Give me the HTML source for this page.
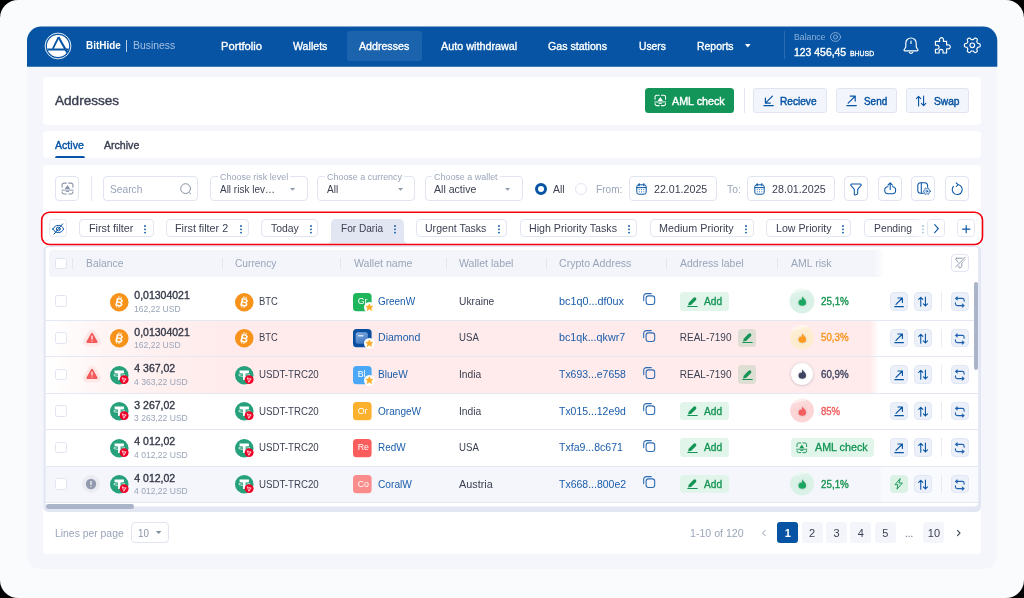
<!DOCTYPE html>
<html><head><meta charset="utf-8"><title>Addresses</title>
<style>
html,body{margin:0;padding:0}
body{width:1024px;height:598px;background:#000;overflow:hidden;font-family:"Liberation Sans",sans-serif;}
#frame{will-change:transform;position:absolute;left:0;top:0;width:1024px;height:598px;border-radius:18px;background:#fafbfd;overflow:hidden}
.b{position:absolute;box-sizing:border-box}
.t{position:absolute;white-space:nowrap;transform-origin:0 50%}
.card{background:#fff;border-radius:4px}
.btn{background:#fff;border:1px solid #e0e5f1;border-radius:4px}
.chip{background:#fff;border:1px solid #e0e5f1;border-radius:4px}
.rb{background:#ecf0f9;border:1px solid #e1e7f5;border-radius:4px}
.pg{background:#f3f5fa;border-radius:3px;color:#3a3f51;font-size:11px;display:flex;align-items:center;justify-content:center}
svg{overflow:visible}
</style></head><body><div id="frame">
<div class="b" style="left:27.00px;top:27.00px;width:970.30px;height:542.00px;background:#f4f6fb;border-radius:15px 15px 13px 13px"></div>
<svg class="b" style="left:0.00px;top:0.00px;" width="1024" height="598" viewBox="0 0 1024 598"><path fill="#0654a3" d="M27 66.7V40.8A14.2 14.2 0 0 1 41.2 26.6H983.1A14.2 14.2 0 0 1 997.3 40.8V66.7Z"/></svg>
<svg class="b" style="left:44.00px;top:31.50px;" width="28" height="28" viewBox="-14 -14 28 28"><circle r="12.9" fill="none" stroke="#fff" stroke-width="0.9"/><circle r="11.1" fill="#fff"/><path fill="none" stroke="#0654a3" stroke-width="1.8" d="M0.6 -8.9L-5.2 2.8"/><path fill="none" stroke="#0654a3" stroke-width="1.9" d="M-10.6 3.5H10.6"/><path fill="none" stroke="#0654a3" stroke-width="2.1" d="M0.4 -8.9L9.4 6.8"/></svg>
<span class="t" style="left:85.50px;top:39.00px;font-size:10px;line-height:13px;color:#fff;font-weight:700;transform:scaleX(0.9943);">BitHide</span>
<div class="b" style="left:126.00px;top:39.80px;width:1.10px;height:12.00px;background:rgba(255,255,255,.7)"></div>
<span class="t" style="left:132.60px;top:39.00px;font-size:10px;line-height:13px;color:#a4c0e2;transform:scaleX(1.0375);">Business</span>
<div class="b" style="left:346.90px;top:31.00px;width:74.90px;height:29.70px;background:#1b63ad;border-radius:3px"></div>
<span class="t" style="left:220.50px;top:39.00px;font-size:11px;line-height:15px;color:#fff;transform:scaleX(1.0157);-webkit-text-stroke:0.35px #fff;">Portfolio</span>
<span class="t" style="left:292.70px;top:39.00px;font-size:11px;line-height:15px;color:#fff;transform:scaleX(0.9648);-webkit-text-stroke:0.35px #fff;">Wallets</span>
<span class="t" style="left:358.90px;top:39.00px;font-size:11px;line-height:15px;color:#fff;transform:scaleX(0.9658);-webkit-text-stroke:0.35px #fff;">Addresses</span>
<span class="t" style="left:440.80px;top:39.00px;font-size:11px;line-height:15px;color:#fff;transform:scaleX(0.9812);-webkit-text-stroke:0.35px #fff;">Auto withdrawal</span>
<span class="t" style="left:548.00px;top:39.00px;font-size:11px;line-height:15px;color:#fff;transform:scaleX(0.9650);-webkit-text-stroke:0.35px #fff;">Gas stations</span>
<span class="t" style="left:638.50px;top:39.00px;font-size:11px;line-height:15px;color:#fff;transform:scaleX(0.9366);-webkit-text-stroke:0.35px #fff;">Users</span>
<span class="t" style="left:697.40px;top:39.00px;font-size:11px;line-height:15px;color:#fff;transform:scaleX(0.9502);-webkit-text-stroke:0.35px #fff;">Reports</span>
<svg class="b" style="left:744.80px;top:44.30px;" width="5.6" height="3.4" viewBox="0 0 5.6 3.4"><path fill="#fff" d="M0 0h5.6L2.8 3.4z"/></svg>
<div class="b" style="left:784.00px;top:31.30px;width:1.00px;height:28.00px;background:rgba(255,255,255,.14)"></div>
<span class="t" style="left:793.60px;top:31.00px;font-size:9px;line-height:12px;color:#8fb1db;transform:scaleX(0.9654);">Balance</span>
<svg class="b" style="left:829.70px;top:32.20px;" width="11" height="10" viewBox="0 0 11 10"><ellipse cx="5.5" cy="5" rx="5" ry="4.4" fill="none" stroke="#8fb1db" stroke-width="0.9" stroke-linecap="round" stroke-linejoin="round"/><circle cx="5.5" cy="5" r="2" fill="none" stroke="#8fb1db" stroke-width="0.9" stroke-linecap="round" stroke-linejoin="round"/></svg>
<span class="t" style="left:793.60px;top:45.00px;font-size:11px;line-height:15px;color:#fff;transform:scaleX(0.9476);-webkit-text-stroke:0.4px #fff;">123 456,45</span>
<span class="t" style="left:849.50px;top:49.00px;font-size:7.5px;line-height:10px;color:#fff;transform:scaleX(0.9192);-webkit-text-stroke:0.3px #fff;">BHUSD</span>
<svg class="b" style="left:903.30px;top:36.60px;" width="16" height="18" viewBox="0 0 16 18"><path fill="none" stroke="#fff" stroke-width="1.15" stroke-linecap="round" stroke-linejoin="round" d="M8 1A5.2 5.2 0 0 0 2.8 6.2V9.4C2.8 11 1 12.2 1 13.2A.7 .7 0 0 0 1.7 13.9H14.3A.7 .7 0 0 0 15 13.2C15 12.2 13.2 11 13.2 9.4V6.2A5.2 5.2 0 0 0 8 1Z"/><path fill="none" stroke="#fff" stroke-width="1.15" stroke-linecap="round" stroke-linejoin="round" d="M6.2 15.2A2 2 0 0 0 9.8 15.2M8 4V6.4"/></svg>
<svg class="b" style="left:932.50px;top:37.00px;" width="18" height="17.5" viewBox="0 0 18 17.5"><path fill="none" stroke="#fff" stroke-width="1.15" stroke-linecap="round" stroke-linejoin="round" d="M6.6 3.3A2 2 0 1 1 10.4 3.3V4.4H13.6V7.9H14.7A2 2 0 1 1 14.7 11.7H13.6V16H10V15A2 2 0 1 0 6.2 15V16H2.4V12.2H3.3A2.1 2.1 0 1 0 3.3 8.2H2.4V4.4H6.6Z"/></svg>
<svg class="b" style="left:964.00px;top:37.20px;" width="16.6" height="16.6" viewBox="-8.3 -8.3 16.6 16.6"><path fill="none" stroke="#fff" stroke-width="1.15" stroke-linecap="round" stroke-linejoin="round" d="M7.90 0.00L7.90 0.28L7.88 0.55L7.86 0.83L7.82 1.10L7.67 1.35L7.25 1.54L6.80 1.70L6.34 1.82L5.89 1.91L5.46 1.99L5.28 2.14L5.21 2.32L5.12 2.50L5.03 2.68L4.94 2.85L4.83 3.02L4.73 3.19L4.61 3.35L4.49 3.51L4.45 3.73L4.60 4.14L4.74 4.58L4.87 5.04L4.96 5.51L5.01 5.97L4.86 6.23L4.64 6.39L4.42 6.55L4.19 6.70L3.95 6.84L3.71 6.98L3.46 7.10L3.21 7.22L2.96 7.32L2.66 7.32L2.29 7.05L1.93 6.74L1.59 6.40L1.29 6.05L1.01 5.72L0.79 5.64L0.60 5.67L0.40 5.69L0.20 5.70L0.00 5.70L-0.20 5.70L-0.40 5.69L-0.60 5.67L-0.79 5.64L-1.01 5.72L-1.29 6.05L-1.59 6.40L-1.93 6.74L-2.29 7.05L-2.66 7.32L-2.96 7.32L-3.21 7.22L-3.46 7.10L-3.71 6.98L-3.95 6.84L-4.19 6.70L-4.42 6.55L-4.64 6.39L-4.86 6.23L-5.01 5.97L-4.96 5.51L-4.87 5.04L-4.74 4.58L-4.60 4.14L-4.45 3.73L-4.49 3.51L-4.61 3.35L-4.73 3.19L-4.83 3.02L-4.94 2.85L-5.03 2.68L-5.12 2.50L-5.21 2.32L-5.28 2.14L-5.46 1.99L-5.89 1.91L-6.34 1.82L-6.80 1.70L-7.25 1.54L-7.67 1.35L-7.82 1.10L-7.86 0.83L-7.88 0.55L-7.90 0.28L-7.90 0.00L-7.90 -0.28L-7.88 -0.55L-7.86 -0.83L-7.82 -1.10L-7.67 -1.35L-7.25 -1.54L-6.80 -1.70L-6.34 -1.82L-5.89 -1.91L-5.46 -1.99L-5.28 -2.14L-5.21 -2.32L-5.12 -2.50L-5.03 -2.68L-4.94 -2.85L-4.83 -3.02L-4.73 -3.19L-4.61 -3.35L-4.49 -3.51L-4.45 -3.73L-4.60 -4.14L-4.74 -4.58L-4.87 -5.04L-4.96 -5.51L-5.01 -5.97L-4.86 -6.23L-4.64 -6.39L-4.42 -6.55L-4.19 -6.70L-3.95 -6.84L-3.71 -6.98L-3.46 -7.10L-3.21 -7.22L-2.96 -7.32L-2.66 -7.32L-2.29 -7.05L-1.93 -6.74L-1.59 -6.40L-1.29 -6.05L-1.01 -5.72L-0.79 -5.64L-0.60 -5.67L-0.40 -5.69L-0.20 -5.70L-0.00 -5.70L0.20 -5.70L0.40 -5.69L0.60 -5.67L0.79 -5.64L1.01 -5.72L1.29 -6.05L1.59 -6.40L1.93 -6.74L2.29 -7.05L2.66 -7.32L2.96 -7.32L3.21 -7.22L3.46 -7.10L3.71 -6.98L3.95 -6.84L4.19 -6.70L4.42 -6.55L4.64 -6.39L4.86 -6.23L5.01 -5.97L4.96 -5.51L4.87 -5.04L4.74 -4.58L4.60 -4.14L4.45 -3.73L4.49 -3.51L4.61 -3.35L4.73 -3.19L4.83 -3.02L4.94 -2.85L5.03 -2.68L5.12 -2.50L5.21 -2.32L5.28 -2.14L5.46 -1.99L5.89 -1.91L6.34 -1.82L6.80 -1.70L7.25 -1.54L7.67 -1.35L7.82 -1.10L7.86 -0.83L7.88 -0.55L7.90 -0.28Z"/><circle r="2.3" fill="none" stroke="#fff" stroke-width="1.15" stroke-linecap="round" stroke-linejoin="round"/></svg>
<div class="b card" style="left:43.00px;top:76.50px;width:938.00px;height:48.10px;"></div>
<span class="t" style="left:55.40px;top:92.00px;font-size:13px;line-height:17px;color:#3a3f51;transform:scaleX(1.0444);-webkit-text-stroke:0.4px #3a3f51;">Addresses</span>
<div class="b" style="left:644.50px;top:88.20px;width:89.80px;height:24.40px;background:#139458;border-radius:3.5px"></div>
<svg class="b" style="left:653.80px;top:93.90px;" width="12.6" height="12.8" viewBox="0 0 12 12"><path fill="none" stroke="#fff" stroke-width="1.0" stroke-linecap="round" stroke-linejoin="round" d="M1 4.8V2.8A1.8 1.8 0 0 1 2.8 1H4.9M7.1 1H9.2A1.8 1.8 0 0 1 11 2.8V4.8M11 9V9.2A1.8 1.8 0 0 1 9.2 11H7.1M4.9 11H2.8A1.8 1.8 0 0 1 1 9.2V9"/><path fill="#fff" d="M6 2.7L8.5 6.5H3.5z"/><path fill="none" stroke="#fff" stroke-width="0.9" stroke-linecap="round" stroke-linejoin="round" d="M0.8 7.5h10.4"/><path fill="#fff" d="M3.9 8.4h4.2Q6 10.3 3.9 8.4z"/></svg>
<span class="t" style="left:672.30px;top:94.00px;font-size:11px;line-height:15px;color:#fff;transform:scaleX(0.9753);-webkit-text-stroke:0.4px #fff;">AML check</span>
<div class="b" style="left:743.50px;top:88.20px;width:1.00px;height:24.40px;background:#e3e7f1"></div>
<div class="b" style="left:753.00px;top:88.20px;width:73.70px;height:24.40px;background:#f2f5fb;border:1px solid #e0e5f1;border-radius:3px"></div>
<svg class="b" style="left:762.50px;top:94.50px;" width="11.2" height="11.5" viewBox="0 0 10.2 10.5"><path fill="none" stroke="#0654a3" stroke-width="1.1" stroke-linecap="round" stroke-linejoin="round" d="M8.6 1L2.2 7.4M2.2 2.9v4.5h4.5M0.8 9.7h8.6"/></svg>
<span class="t" style="left:780.40px;top:94.00px;font-size:11px;line-height:15px;color:#0654a3;transform:scaleX(0.9197);-webkit-text-stroke:0.45px #0654a3;">Recieve</span>
<div class="b" style="left:835.90px;top:88.20px;width:60.70px;height:24.40px;background:#f2f5fb;border:1px solid #e0e5f1;border-radius:3px"></div>
<svg class="b" style="left:845.70px;top:94.50px;" width="11.2" height="11.5" viewBox="0 0 10.2 10.5"><path fill="none" stroke="#0654a3" stroke-width="1.1" stroke-linecap="round" stroke-linejoin="round" d="M2 7.4L8.4 1M3.9 1h4.5v4.5M0.8 9.7h8.6"/></svg>
<span class="t" style="left:863.60px;top:94.00px;font-size:11px;line-height:15px;color:#0654a3;transform:scaleX(0.9014);-webkit-text-stroke:0.45px #0654a3;">Send</span>
<div class="b" style="left:906.10px;top:88.20px;width:62.70px;height:24.40px;background:#f2f5fb;border:1px solid #e0e5f1;border-radius:3px"></div>
<svg class="b" style="left:915.70px;top:94.60px;" width="10.2" height="12" viewBox="0 0 10.2 12"><path fill="none" stroke="#0654a3" stroke-width="1.1" stroke-linecap="round" stroke-linejoin="round" d="M2.6 11V1.4M0.4 3.6L2.6 1.4L4.8 3.6M7.6 1v9.6M5.4 8.4L7.6 10.6L9.8 8.4"/></svg>
<span class="t" style="left:933.70px;top:94.00px;font-size:11px;line-height:15px;color:#0654a3;transform:scaleX(0.9285);-webkit-text-stroke:0.45px #0654a3;">Swap</span>
<div class="b card" style="left:43.00px;top:130.80px;width:938.00px;height:27.50px;"></div>
<span class="t" style="left:55.40px;top:138.00px;font-size:11px;line-height:15px;color:#0654a3;transform:scaleX(0.9637);-webkit-text-stroke:0.4px #0654a3;">Active</span>
<span class="t" style="left:103.80px;top:138.00px;font-size:11px;line-height:15px;color:#3a3f51;transform:scaleX(0.9615);-webkit-text-stroke:0.4px #3a3f51;">Archive</span>
<div class="b" style="left:55.00px;top:156.20px;width:30.00px;height:2.10px;background:#0654a3;border-radius:2px 2px 0 0"></div>
<div class="b card" style="left:43.00px;top:164.60px;width:938.00px;height:389.60px;"></div>
<div class="b btn" style="left:55.00px;top:176.30px;width:24.00px;height:24.60px;"></div>
<svg class="b" style="left:60.50px;top:182.20px;" width="13" height="13" viewBox="0 0 12 12"><path fill="none" stroke="#8892a8" stroke-width="1.0" stroke-linecap="round" stroke-linejoin="round" d="M1 4.8V2.8A1.8 1.8 0 0 1 2.8 1H4.9M7.1 1H9.2A1.8 1.8 0 0 1 11 2.8V4.8M11 9V9.2A1.8 1.8 0 0 1 9.2 11H7.1M4.9 11H2.8A1.8 1.8 0 0 1 1 9.2V9"/><path fill="#8892a8" d="M6 2.7L8.5 6.5H3.5z"/><path fill="none" stroke="#8892a8" stroke-width="0.9" stroke-linecap="round" stroke-linejoin="round" d="M0.8 7.5h10.4"/><path fill="#8892a8" d="M3.9 8.4h4.2Q6 10.3 3.9 8.4z"/></svg>
<div class="b" style="left:91.30px;top:176.30px;width:1.00px;height:24.60px;background:#e3e7f1"></div>
<div class="b btn" style="left:103.40px;top:176.30px;width:94.30px;height:24.60px;"></div>
<span class="t" style="left:109.70px;top:182.00px;font-size:11px;line-height:15px;color:#9aa5b9;transform:scaleX(0.9267);">Search</span>
<svg class="b" style="left:179.80px;top:183.20px;" width="12" height="12" viewBox="0 0 12 12"><circle cx="5.6" cy="5.6" r="4.9" fill="none" stroke="#7f8a9f" stroke-width="0.95" stroke-linecap="round" stroke-linejoin="round"/><path fill="none" stroke="#7f8a9f" stroke-width="0.95" stroke-linecap="round" stroke-linejoin="round" d="M9.6 9.8l1 1"/></svg>
<div class="b btn" style="left:210.00px;top:176.30px;width:98.00px;height:24.60px;"></div>
<div class="b" style="left:217.50px;top:175.30px;width:72.20px;height:3.00px;background:#fff"></div>
<span class="t" style="left:219.50px;top:171.00px;font-size:8.5px;line-height:12px;color:#9aa5b9;transform:scaleX(1.0537);">Choose risk level</span>
<span class="t" style="left:219.50px;top:182.00px;font-size:11px;line-height:15px;color:#3a3f51;transform:scaleX(0.9073);">All risk lev…</span>
<svg class="b" style="left:290.40px;top:187.60px;" width="5.2" height="2.8" viewBox="0 0 5.6 3"><path fill="#939db0" d="M0 0h5.6L2.8 3z"/></svg>
<div class="b btn" style="left:317.30px;top:176.30px;width:98.00px;height:24.60px;"></div>
<div class="b" style="left:324.80px;top:175.30px;width:79.00px;height:3.00px;background:#fff"></div>
<span class="t" style="left:326.80px;top:171.00px;font-size:8.5px;line-height:12px;color:#9aa5b9;transform:scaleX(1.0513);">Choose a currency</span>
<span class="t" style="left:326.80px;top:182.00px;font-size:11px;line-height:15px;color:#3a3f51;transform:scaleX(0.9161);">All</span>
<svg class="b" style="left:397.50px;top:187.60px;" width="5.2" height="2.8" viewBox="0 0 5.6 3"><path fill="#939db0" d="M0 0h5.6L2.8 3z"/></svg>
<div class="b btn" style="left:424.60px;top:176.30px;width:98.00px;height:24.60px;"></div>
<div class="b" style="left:432.10px;top:175.30px;width:67.60px;height:3.00px;background:#fff"></div>
<span class="t" style="left:434.10px;top:171.00px;font-size:8.5px;line-height:12px;color:#9aa5b9;transform:scaleX(1.0516);">Choose a wallet</span>
<span class="t" style="left:434.10px;top:182.00px;font-size:11px;line-height:15px;color:#3a3f51;transform:scaleX(0.9610);">All active</span>
<svg class="b" style="left:505.00px;top:187.60px;" width="5.2" height="2.8" viewBox="0 0 5.6 3"><path fill="#939db0" d="M0 0h5.6L2.8 3z"/></svg>
<div class="b" style="left:534.60px;top:183.00px;width:12.40px;height:12.40px;border:3.2px solid #0654a3;border-radius:50%;background:#fff"></div>
<span class="t" style="left:553.40px;top:182.00px;font-size:11px;line-height:15px;color:#3a3f51;transform:scaleX(0.9488);">All</span>
<div class="b" style="left:574.70px;top:183.00px;width:12.20px;height:12.20px;border:1px solid #e0e5f1;border-radius:50%;background:#fff"></div>
<span class="t" style="left:596.20px;top:182.00px;font-size:11px;line-height:15px;color:#9aa5b9;transform:scaleX(0.9192);">From:</span>
<div class="b btn" style="left:629.20px;top:176.30px;width:87.60px;height:24.60px;"></div>
<svg class="b" style="left:636.00px;top:183.00px;" width="11" height="12" viewBox="0 0 11 12"><rect fill="none" stroke="#0654a3" stroke-width="1.0" stroke-linecap="round" stroke-linejoin="round" x="0.8" y="1.8" width="9.4" height="9.4" rx="2"/><path fill="none" stroke="#0654a3" stroke-width="1.0" stroke-linecap="round" stroke-linejoin="round" d="M3.2 0.6v2.2M7.8 0.6v2.2M1 4.6h9"/><path fill="none" stroke="#0654a3" stroke-width="0.9" stroke-linecap="round" stroke-linejoin="round" d="M3.2 6.6h0.1M5.5 6.6h0.1M7.8 6.6h0.1M3.2 8.8h0.1M5.5 8.8h0.1M7.8 8.8h0.1"/></svg>
<span class="t" style="left:654.10px;top:182.00px;font-size:11px;line-height:15px;color:#3a3f51;transform:scaleX(0.9663);">22.01.2025</span>
<span class="t" style="left:726.60px;top:182.00px;font-size:11px;line-height:15px;color:#9aa5b9;transform:scaleX(0.9404);">To:</span>
<div class="b btn" style="left:747.00px;top:176.30px;width:87.80px;height:24.60px;"></div>
<svg class="b" style="left:753.80px;top:183.00px;" width="11" height="12" viewBox="0 0 11 12"><rect fill="none" stroke="#0654a3" stroke-width="1.0" stroke-linecap="round" stroke-linejoin="round" x="0.8" y="1.8" width="9.4" height="9.4" rx="2"/><path fill="none" stroke="#0654a3" stroke-width="1.0" stroke-linecap="round" stroke-linejoin="round" d="M3.2 0.6v2.2M7.8 0.6v2.2M1 4.6h9"/><path fill="none" stroke="#0654a3" stroke-width="0.9" stroke-linecap="round" stroke-linejoin="round" d="M3.2 6.6h0.1M5.5 6.6h0.1M7.8 6.6h0.1M3.2 8.8h0.1M5.5 8.8h0.1M7.8 8.8h0.1"/></svg>
<span class="t" style="left:771.70px;top:182.00px;font-size:11px;line-height:15px;color:#3a3f51;transform:scaleX(0.9736);">28.01.2025</span>
<div class="b btn" style="left:844.20px;top:176.30px;width:24.10px;height:24.60px;"></div>
<div class="b btn" style="left:877.80px;top:176.30px;width:24.10px;height:24.60px;"></div>
<div class="b btn" style="left:911.20px;top:176.30px;width:24.10px;height:24.60px;"></div>
<div class="b btn" style="left:944.90px;top:176.30px;width:24.10px;height:24.60px;"></div>
<svg class="b" style="left:850.40px;top:182.60px;" width="12" height="12.6" viewBox="0 0 12 12.6"><path fill="none" stroke="#0654a3" stroke-width="1.05" stroke-linecap="round" stroke-linejoin="round" d="M1.7 1H10.3A.9 .9 0 0 1 11 2.5L7.7 6.3V10.3A1 1 0 0 1 7.1 11.2L5.5 11.9A.8 .8 0 0 1 4.3 11.2V6.3L1 2.5A.9 .9 0 0 1 1.7 1Z"/></svg>
<svg class="b" style="left:883.60px;top:182.20px;" width="12.4" height="12.6" viewBox="0 0 12.4 12.6"><path fill="none" stroke="#0654a3" stroke-width="1.05" stroke-linecap="round" stroke-linejoin="round" d="M6.2 0.9V7.6M4 3.1L6.2 0.9L8.4 3.1M3.9 4.7H3.7A2.9 2.9 0 0 0 .8 7.6V8.9A2.9 2.9 0 0 0 3.7 11.8H8.7A2.9 2.9 0 0 0 11.6 8.9V7.6A2.9 2.9 0 0 0 8.7 4.7H8.5"/></svg>
<svg class="b" style="left:916.60px;top:182.40px;" width="13.6" height="13" viewBox="0 0 13.6 13"><path fill="none" stroke="#0654a3" stroke-width="1.05" stroke-linecap="round" stroke-linejoin="round" d="M6.6 11.2H3.4A2.6 2.6 0 0 1 .8 8.6V3.4A2.6 2.6 0 0 1 3.4 .8H8A2.6 2.6 0 0 1 10.6 3.4V5.2M4.3 .8V11.2"/><path fill="none" stroke="#0654a3" stroke-width="0.85" stroke-linecap="round" stroke-linejoin="round" d="M13.30 9.30L13.29 9.52L13.27 9.74L13.10 9.94L12.75 10.06L12.40 10.15L12.21 10.26L12.14 10.41L12.07 10.55L11.98 10.69L11.88 10.82L11.88 11.04L11.99 11.39L12.05 11.75L11.97 12.00L11.79 12.13L11.60 12.24L11.40 12.35L11.20 12.44L10.95 12.39L10.66 12.15L10.42 11.89L10.23 11.78L10.06 11.79L9.90 11.80L9.74 11.79L9.57 11.78L9.38 11.89L9.14 12.15L8.85 12.39L8.60 12.44L8.40 12.35L8.20 12.24L8.01 12.13L7.83 12.00L7.75 11.75L7.81 11.39L7.92 11.04L7.92 10.82L7.82 10.69L7.73 10.55L7.66 10.41L7.59 10.26L7.40 10.15L7.05 10.06L6.70 9.94L6.53 9.74L6.51 9.52L6.50 9.30L6.51 9.08L6.53 8.86L6.70 8.66L7.05 8.54L7.40 8.45L7.59 8.34L7.66 8.19L7.73 8.05L7.82 7.91L7.92 7.78L7.92 7.56L7.81 7.21L7.75 6.85L7.83 6.60L8.01 6.47L8.20 6.36L8.40 6.25L8.60 6.16L8.85 6.21L9.14 6.45L9.38 6.71L9.57 6.82L9.74 6.81L9.90 6.80L10.06 6.81L10.23 6.82L10.42 6.71L10.66 6.45L10.95 6.21L11.20 6.16L11.40 6.25L11.60 6.36L11.79 6.47L11.97 6.60L12.05 6.85L11.99 7.21L11.88 7.56L11.88 7.78L11.98 7.91L12.07 8.05L12.14 8.19L12.21 8.34L12.40 8.45L12.75 8.54L13.10 8.66L13.27 8.86L13.29 9.08Z"/><circle cx="9.9" cy="9.3" r="0.9" fill="none" stroke="#0654a3" stroke-width="0.8" stroke-linecap="round" stroke-linejoin="round"/></svg>
<svg class="b" style="left:950.80px;top:182.00px;" width="12.4" height="13" viewBox="0 0 12.4 13"><path fill="none" stroke="#0654a3" stroke-width="1.05" stroke-linecap="round" stroke-linejoin="round" d="M7.07 2.58A5 5 0 1 1 2.37 4.29M5.2 .8L7.2 2.6L5.3 4.5"/></svg>
<div class="b btn" style="left:49.00px;top:219.20px;width:17.60px;height:18.00px;border-color:#e6eaf4;border-radius:3.5px"></div>
<svg class="b" style="left:51.80px;top:222.80px;" width="12.6" height="12" viewBox="0 0 12.6 12"><path fill="none" stroke="#0654a3" stroke-width="1.0" stroke-linecap="round" stroke-linejoin="round" d="M.9 6C2.2 3.6 4 2.4 6.3 2.4S10.4 3.6 11.7 6C10.4 8.4 8.6 9.6 6.3 9.6S2.2 8.4 .9 6Z"/><circle cx="6.3" cy="6" r="1.9" fill="none" stroke="#0654a3" stroke-width="1.0" stroke-linecap="round" stroke-linejoin="round"/><path fill="none" stroke="#0654a3" stroke-width="1.0" stroke-linecap="round" stroke-linejoin="round" d="M10.6 .9L2 11.1"/></svg>
<div class="b chip" style="left:79.40px;top:219.20px;width:74.20px;height:18.00px;"></div>
<span class="t" style="left:88.60px;top:221.00px;font-size:10.5px;line-height:14px;color:#3a3f51;transform:scaleX(1.0286);">First filter</span>
<svg class="b" style="left:144.30px;top:224.90px;" width="2" height="8.6" viewBox="0 0 2 8.6"><circle cx="1" cy="1" r="0.9" fill="#0654a3"/><circle cx="1" cy="4.3" r="0.9" fill="#0654a3"/><circle cx="1" cy="7.6" r="0.9" fill="#0654a3"/></svg>
<div class="b chip" style="left:166.10px;top:219.20px;width:82.70px;height:18.00px;"></div>
<span class="t" style="left:175.40px;top:221.00px;font-size:10.5px;line-height:14px;color:#3a3f51;transform:scaleX(1.0227);">First filter 2</span>
<svg class="b" style="left:239.50px;top:224.90px;" width="2" height="8.6" viewBox="0 0 2 8.6"><circle cx="1" cy="1" r="0.9" fill="#0654a3"/><circle cx="1" cy="4.3" r="0.9" fill="#0654a3"/><circle cx="1" cy="7.6" r="0.9" fill="#0654a3"/></svg>
<div class="b chip" style="left:261.40px;top:219.20px;width:57.10px;height:18.00px;"></div>
<span class="t" style="left:271.20px;top:221.00px;font-size:10.5px;line-height:14px;color:#3a3f51;transform:scaleX(0.9922);">Today</span>
<svg class="b" style="left:309.80px;top:224.90px;" width="2" height="8.6" viewBox="0 0 2 8.6"><circle cx="1" cy="1" r="0.9" fill="#0654a3"/><circle cx="1" cy="4.3" r="0.9" fill="#0654a3"/><circle cx="1" cy="7.6" r="0.9" fill="#0654a3"/></svg>
<svg class="b" style="left:326.30px;top:219.20px;" width="82.99999999999999" height="24.6" viewBox="0 0 83.0 24.6"><path fill="#e2e6f2" d="M0 24.6Q5 24.6 5 19.6V5.5Q5 0 10.5 0H72.5Q78.0 0 78.0 5.5V19.6Q78.0 24.6 83.0 24.6Z"/></svg>
<span class="t" style="left:340.60px;top:221.00px;font-size:10.5px;line-height:14px;color:#3a3f51;transform:scaleX(0.9621);">For Daria</span>
<svg class="b" style="left:394.20px;top:224.90px;" width="2" height="8.6" viewBox="0 0 2 8.6"><circle cx="1" cy="1" r="0.9" fill="#0654a3"/><circle cx="1" cy="4.3" r="0.9" fill="#0654a3"/><circle cx="1" cy="7.6" r="0.9" fill="#0654a3"/></svg>
<div class="b chip" style="left:416.20px;top:219.20px;width:91.10px;height:18.00px;"></div>
<span class="t" style="left:425.30px;top:221.00px;font-size:10.5px;line-height:14px;color:#3a3f51;transform:scaleX(1.0052);">Urgent Tasks</span>
<svg class="b" style="left:498.20px;top:224.90px;" width="2" height="8.6" viewBox="0 0 2 8.6"><circle cx="1" cy="1" r="0.9" fill="#0654a3"/><circle cx="1" cy="4.3" r="0.9" fill="#0654a3"/><circle cx="1" cy="7.6" r="0.9" fill="#0654a3"/></svg>
<div class="b chip" style="left:519.80px;top:219.20px;width:117.50px;height:18.00px;"></div>
<span class="t" style="left:529.00px;top:221.00px;font-size:10.5px;line-height:14px;color:#3a3f51;transform:scaleX(1.0144);">High Priority Tasks</span>
<svg class="b" style="left:628.30px;top:224.90px;" width="2" height="8.6" viewBox="0 0 2 8.6"><circle cx="1" cy="1" r="0.9" fill="#0654a3"/><circle cx="1" cy="4.3" r="0.9" fill="#0654a3"/><circle cx="1" cy="7.6" r="0.9" fill="#0654a3"/></svg>
<div class="b chip" style="left:650.10px;top:219.20px;width:103.50px;height:18.00px;"></div>
<span class="t" style="left:659.40px;top:221.00px;font-size:10.5px;line-height:14px;color:#3a3f51;transform:scaleX(1.0242);">Medium Priority</span>
<svg class="b" style="left:744.90px;top:224.90px;" width="2" height="8.6" viewBox="0 0 2 8.6"><circle cx="1" cy="1" r="0.9" fill="#0654a3"/><circle cx="1" cy="4.3" r="0.9" fill="#0654a3"/><circle cx="1" cy="7.6" r="0.9" fill="#0654a3"/></svg>
<div class="b chip" style="left:766.40px;top:219.20px;width:85.00px;height:18.00px;"></div>
<span class="t" style="left:775.70px;top:221.00px;font-size:10.5px;line-height:14px;color:#3a3f51;transform:scaleX(1.0137);">Low Priority</span>
<svg class="b" style="left:842.10px;top:224.90px;" width="2" height="8.6" viewBox="0 0 2 8.6"><circle cx="1" cy="1" r="0.9" fill="#0654a3"/><circle cx="1" cy="4.3" r="0.9" fill="#0654a3"/><circle cx="1" cy="7.6" r="0.9" fill="#0654a3"/></svg>
<div class="b chip" style="left:864.20px;top:219.20px;width:69.80px;height:18.00px;"></div>
<span class="t" style="left:873.50px;top:221.00px;font-size:10.5px;line-height:14px;color:#3a3f51;transform:scaleX(0.9835);">Pending</span>
<svg class="b" style="left:922.10px;top:224.90px;" width="2" height="8.6" viewBox="0 0 2 8.6"><circle cx="1" cy="1" r="0.9" fill="#0654a3"/><circle cx="1" cy="4.3" r="0.9" fill="#0654a3"/><circle cx="1" cy="7.6" r="0.9" fill="#0654a3"/></svg>
<div class="b" style="left:913.00px;top:218.00px;width:27.00px;height:21.00px;background:linear-gradient(90deg,rgba(255,255,255,0) 0,#fff 60%)"></div>
<div class="b btn" style="left:927.20px;top:219.20px;width:17.60px;height:18.00px;border-color:#e2e7f2;border-radius:3.5px"></div>
<svg class="b" style="left:933.60px;top:224.00px;" width="5" height="9.4" viewBox="0 0 5 9.4"><path fill="none" stroke="#0654a3" stroke-width="1.1" stroke-linecap="round" stroke-linejoin="round" d="M.7 .7L4.3 4.7L.7 8.7"/></svg>
<div class="b btn" style="left:957.00px;top:219.20px;width:17.60px;height:18.00px;border-color:#e2e7f2;border-radius:3.5px"></div>
<svg class="b" style="left:961.60px;top:224.50px;" width="8.4" height="8.4" viewBox="0 0 8.4 8.4"><path fill="none" stroke="#0654a3" stroke-width="1.15" stroke-linecap="round" stroke-linejoin="round" d="M4.2 .6V7.8M.6 4.2H7.8"/></svg>
<svg class="b" style="left:0.00px;top:0.00px;" width="1024" height="598" viewBox="0 0 1024 598"><path fill="#e3e7f3" fill-rule="evenodd" d="M48.3 245.6H976A5 5 0 0 1 981 250.6V507A5 5 0 0 1 976 512H48.3A5 5 0 0 1 43.3 507V250.6A5 5 0 0 1 48.3 245.6ZM48.7 247A3 3 0 0 0 45.7 250V503.6A3 3 0 0 0 48.7 506.6H975.2A3 3 0 0 0 978.2 503.6V250A3 3 0 0 0 975.2 247Z"/></svg>
<div class="b" style="left:49.00px;top:249.70px;width:836.00px;height:27.10px;border-radius:4px;background:linear-gradient(90deg,#f3f5fa 0,#f3f5fa calc(100% - 11px),#fff 100%)"></div>
<div class="b" style="left:55.20px;top:257.80px;width:11.60px;height:11.60px;background:#fff;border:1px solid #e0e5f1;border-radius:2.5px"></div>
<div class="b" style="left:72.10px;top:257.80px;width:1.00px;height:11.60px;background:#e2e6f0"></div>
<span class="t" style="left:85.60px;top:257.00px;font-size:10px;line-height:13px;color:#9aa5b9;transform:scaleX(1.0349);">Balance</span>
<div class="b" style="left:221.80px;top:257.80px;width:1.00px;height:11.60px;background:#e2e6f0"></div>
<span class="t" style="left:235.00px;top:257.00px;font-size:10px;line-height:13px;color:#9aa5b9;transform:scaleX(1.0205);">Currency</span>
<div class="b" style="left:340.10px;top:257.80px;width:1.00px;height:11.60px;background:#e2e6f0"></div>
<span class="t" style="left:353.60px;top:257.00px;font-size:10px;line-height:13px;color:#9aa5b9;transform:scaleX(1.0579);">Wallet name</span>
<div class="b" style="left:445.70px;top:257.80px;width:1.00px;height:11.60px;background:#e2e6f0"></div>
<span class="t" style="left:458.90px;top:257.00px;font-size:10px;line-height:13px;color:#9aa5b9;transform:scaleX(1.0600);">Wallet label</span>
<div class="b" style="left:545.90px;top:257.80px;width:1.00px;height:11.60px;background:#e2e6f0"></div>
<span class="t" style="left:559.40px;top:257.00px;font-size:10px;line-height:13px;color:#9aa5b9;transform:scaleX(1.0590);">Crypto Address</span>
<div class="b" style="left:666.40px;top:257.80px;width:1.00px;height:11.60px;background:#e2e6f0"></div>
<span class="t" style="left:680.00px;top:257.00px;font-size:10px;line-height:13px;color:#9aa5b9;transform:scaleX(1.0496);">Address label</span>
<div class="b" style="left:776.90px;top:257.80px;width:1.00px;height:11.60px;background:#e2e6f0"></div>
<span class="t" style="left:790.50px;top:257.00px;font-size:10px;line-height:13px;color:#9aa5b9;transform:scaleX(1.0514);">AML risk</span>
<div class="b btn" style="left:951.20px;top:254.00px;width:17.90px;height:18.00px;"></div>
<svg class="b" style="left:954.70px;top:257.20px;" width="10.6" height="12" viewBox="0 0 12 13.6"><path fill="none" stroke="#8d97aa" stroke-width="1.1" stroke-linecap="round" stroke-linejoin="round" d="M1.7 1.4H10.3A.9 .9 0 0 1 11 2.9L7.7 6.7V10.7A1 1 0 0 1 7.1 11.6L5.5 12.3A.8 .8 0 0 1 4.3 11.6V6.7L1 2.9A.9 .9 0 0 1 1.7 1.4Z"/><path stroke="#fff" stroke-width="2.6" d="M11.4 .6L.9 11.2"/><path fill="none" stroke="#8d97aa" stroke-width="1.1" stroke-linecap="round" stroke-linejoin="round" d="M11.6 .3L.6 11.4"/></svg>
<div class="b" style="left:46.00px;top:320.22px;width:833.00px;height:36.52px;background:linear-gradient(90deg,rgba(255,235,235,0) 0,rgba(255,235,235,.55) 60px,#ffebeb 180px,#ffebeb calc(100% - 9px),rgba(255,235,235,0) 100%)"></div>
<div class="b" style="left:46.00px;top:356.74px;width:833.00px;height:36.52px;background:linear-gradient(90deg,rgba(255,235,235,0) 0,rgba(255,235,235,.55) 60px,#ffebeb 180px,#ffebeb calc(100% - 9px),rgba(255,235,235,0) 100%)"></div>
<div class="b" style="left:46.00px;top:466.30px;width:832.00px;height:36.52px;background:#f5f6fb"></div>
<div class="b" style="left:878.00px;top:466.30px;width:100.40px;height:36.52px;background:linear-gradient(90deg,#f5f6fb 0,#f9fafd 6px)"></div>
<div class="b" style="left:46.00px;top:319.72px;width:932.40px;height:1.00px;background:#e4e8f2"></div>
<div class="b" style="left:46.00px;top:356.24px;width:932.40px;height:1.00px;background:#e4e8f2"></div>
<div class="b" style="left:46.00px;top:392.76px;width:932.40px;height:1.00px;background:#e4e8f2"></div>
<div class="b" style="left:46.00px;top:429.28px;width:932.40px;height:1.00px;background:#e4e8f2"></div>
<div class="b" style="left:46.00px;top:465.80px;width:932.40px;height:1.00px;background:#e4e8f2"></div>
<div class="b" style="left:46.00px;top:502.32px;width:932.40px;height:1.00px;background:#e4e8f2"></div>
<div class="b" style="left:55.10px;top:295.46px;width:11.70px;height:11.80px;background:#fff;border:1px solid #e0e5f1;border-radius:2.5px"></div>
<svg class="b" style="left:109.55px;top:292.61px;" width="18.5" height="18.5" viewBox="-9.1 -9.1 18.2 18.2"><circle r="9.1" fill="#f7931a"/><g transform="rotate(13)"><text x="0" y="3.9" text-anchor="middle" font-family="Liberation Sans" font-weight="700" font-size="11" fill="#fff">B</text><path stroke="#fff" stroke-width="1" d="M-1.4 -5.6V-3.6M0.8 -5.6V-3.6M-1.4 3.6V5.6M0.8 3.6V5.6"/></g></svg>
<span class="t" style="left:134.30px;top:288.00px;font-size:10.5px;line-height:14px;color:#343848;-webkit-text-stroke:0.35px #343848;">0,01304021</span>
<span class="t" style="left:134.30px;top:303.00px;font-size:9px;line-height:12px;color:#9aa5b9;transform:scaleX(0.9504);">162,22 USD</span>
<svg class="b" style="left:234.55px;top:292.61px;" width="18.5" height="18.5" viewBox="-9.1 -9.1 18.2 18.2"><circle r="9.1" fill="#f7931a"/><g transform="rotate(13)"><text x="0" y="3.9" text-anchor="middle" font-family="Liberation Sans" font-weight="700" font-size="11" fill="#fff">B</text><path stroke="#fff" stroke-width="1" d="M-1.4 -5.6V-3.6M0.8 -5.6V-3.6M-1.4 3.6V5.6M0.8 3.6V5.6"/></g></svg>
<span class="t" style="left:259.30px;top:295.00px;font-size:10px;line-height:13px;color:#3a3f51;transform:scaleX(0.9400);">BTC</span>
<svg class="b" style="left:353.20px;top:292.51px;" width="18.6" height="18.3" viewBox="0 0 18.6 18.3"><rect width="18.6" height="18.3" rx="3.6" fill="#1fb65b"/></svg>
<span class="t" style="left:357.80px;top:295.00px;font-size:8.8px;line-height:12px;color:#fff;letter-spacing:-0.2px;">Gr</span>
<svg class="b" style="left:363.80px;top:301.51px;" width="10.8" height="10.8" viewBox="-5.4 -5.4 10.8 10.8"><circle r="5.4" fill="#fff"/><path fill="#fbab26" stroke="#fbab26" stroke-width="0.7" stroke-linejoin="round" d="M0 -3.5L1.03 -1.15L3.5 -1.15L1.55 0.53L2.24 3.1L0 1.7L-2.24 3.1L-1.55 0.53L-3.5 -1.15L-1.03 -1.15Z"/></svg>
<span class="t" style="left:377.90px;top:295.00px;font-size:10px;line-height:13px;color:#1a5dab;">GreenW</span>
<span class="t" style="left:458.80px;top:295.00px;font-size:10px;line-height:13px;color:#3a3f51;transform:scaleX(1.0244);">Ukraine</span>
<span class="t" style="left:559.30px;top:295.00px;font-size:10px;line-height:13px;color:#1a5dab;transform:scaleX(1.0809);">bc1q0...df0ux</span>
<svg class="b" style="left:642.50px;top:293.46px;" width="12.4" height="12.2" viewBox="0 0 12.4 12.2"><rect fill="none" stroke="#2d6cb5" stroke-width="1.1" stroke-linecap="round" stroke-linejoin="round" x="3.1" y="2.9" width="8.6" height="8.6" rx="2.4"/><path fill="none" stroke="#2d6cb5" stroke-width="1.1" stroke-linecap="round" stroke-linejoin="round" d="M0.7 7.6V3.2A2.6 2.6 0 0 1 3.3 0.6H8.3"/></svg>
<div class="b" style="left:679.80px;top:292.26px;width:49.30px;height:18.30px;background:#e2f5ea;border-radius:3.5px"></div>
<svg class="b" style="left:687.00px;top:295.76px;" width="11" height="11" viewBox="0 0 11 11"><path stroke="#149455" stroke-width="3.3" stroke-linecap="round" fill="none" d="M3.6 7.1L7.7 3"/><path fill="#149455" d="M1.1 9.5L1.9 6.2L4.5 8.8Z"/><path fill="none" stroke="#149455" stroke-width="1.1" stroke-linecap="round" stroke-linejoin="round" d="M0.8 10.5h9.4"/></svg>
<span class="t" style="left:704.40px;top:295.00px;font-size:10px;line-height:13px;color:#149455;transform:scaleX(1.0182);-webkit-text-stroke:0.3px #149455;">Add</span>
<div class="b" style="left:789.30px;top:288.16px;width:25.60px;height:25.60px;border-radius:50%;background:linear-gradient(166deg,rgba(255,255,255,.5) 0,rgba(255,255,255,.5) 20%,rgba(255,255,255,.15) 22%,rgba(255,255,255,0) 42%),radial-gradient(circle closest-side,rgb(217,241,230) 0,rgb(217,241,230) 91%,rgba(217,241,230,0) 100%)"></div>
<svg class="b" style="left:798.00px;top:296.06px;filter:drop-shadow(0 0.6px 0.8px rgba(0,0,0,.18))" width="8.6" height="10.2" viewBox="0.6 0 6.8 9.2" preserveAspectRatio="none"><path fill="#1aa660" d="M4.2 0.2C4.4 2 7 3.2 7 5.9A3 3 0 0 1 1 5.9C1 4.5 1.8 3.8 2.3 2.9 2.7 3.6 3.1 3.8 3.4 3.6 3.8 2.6 3.7 1.4 4.2 .2z"/></svg>
<span class="t" style="left:820.70px;top:295.00px;font-size:10px;line-height:13px;color:#14934f;transform:scaleX(0.9802);-webkit-text-stroke:0.35px #14934f;">25,1%</span>
<div class="b rb" style="left:890.00px;top:292.16px;width:18.00px;height:18.50px;"></div>
<svg class="b" style="left:894.10px;top:296.86px;" width="10.2" height="10.5" viewBox="0 0 10.2 10.5"><path fill="none" stroke="#0654a3" stroke-width="1.15" stroke-linecap="round" stroke-linejoin="round" d="M2 7.4L8.4 1M3.9 1h4.5v4.5M0.8 9.7h8.6"/></svg>
<div class="b rb" style="left:914.20px;top:292.16px;width:18.20px;height:18.50px;"></div>
<svg class="b" style="left:918.20px;top:296.16px;overflow:visible" width="10.2" height="11.2" viewBox="0 0 10.2 12"><path fill="none" stroke="#0654a3" stroke-width="1.15" stroke-linecap="round" stroke-linejoin="round" d="M2.6 11V1.4M0.4 3.6L2.6 1.4L4.8 3.6M7.6 1v9.6M5.4 8.4L7.6 10.6L9.8 8.4"/></svg>
<div class="b" style="left:941.00px;top:292.36px;width:1.00px;height:18.30px;background:#e8ebf3"></div>
<div class="b rb" style="left:951.00px;top:292.16px;width:18.10px;height:18.50px;"></div>
<svg class="b" style="left:954.10px;top:296.06px;" width="11.6" height="12" viewBox="0 0 12 12.4"><path fill="none" stroke="#1f62b0" stroke-width="1.15" stroke-linecap="round" stroke-linejoin="round" d="M10.5 5.4V4.5A2 2 0 0 0 8.5 2.5H2.2M1.5 7V7.9A2 2 0 0 0 3.5 9.9H9.8"/><path fill="#1f62b0" stroke="#1f62b0" stroke-width="0.6" stroke-linejoin="round" d="M3.4 0.6L1.2 2.5L3.4 4.4ZM8.6 8L10.8 9.9L8.6 11.8Z"/></svg>
<div class="b" style="left:55.10px;top:331.98px;width:11.70px;height:11.80px;background:#fff;border:1px solid #e0e5f1;border-radius:2.5px"></div>
<svg class="b" style="left:81.60px;top:327.88px;" width="20" height="20" viewBox="-10 -10 20 20"><path fill="#fde8e8" stroke="#fde8e8" stroke-width="8.8" stroke-linejoin="round" d="M0 -4.2L4.6 4H-4.6Z"/><path fill="#f55a5a" stroke="#f55a5a" stroke-width="2" stroke-linejoin="round" d="M0 -4.2L4.6 4H-4.6Z"/><path stroke="#fff" stroke-width="1.15" stroke-linecap="round" d="M0 -1.9V1.1M0 3V3.1"/></svg>
<svg class="b" style="left:109.55px;top:329.13px;" width="18.5" height="18.5" viewBox="-9.1 -9.1 18.2 18.2"><circle r="9.1" fill="#f7931a"/><g transform="rotate(13)"><text x="0" y="3.9" text-anchor="middle" font-family="Liberation Sans" font-weight="700" font-size="11" fill="#fff">B</text><path stroke="#fff" stroke-width="1" d="M-1.4 -5.6V-3.6M0.8 -5.6V-3.6M-1.4 3.6V5.6M0.8 3.6V5.6"/></g></svg>
<span class="t" style="left:134.30px;top:325.00px;font-size:10.5px;line-height:14px;color:#343848;-webkit-text-stroke:0.35px #343848;">0,01304021</span>
<span class="t" style="left:134.30px;top:339.00px;font-size:9px;line-height:12px;color:#9aa5b9;transform:scaleX(0.9504);">162,22 USD</span>
<svg class="b" style="left:234.55px;top:329.13px;" width="18.5" height="18.5" viewBox="-9.1 -9.1 18.2 18.2"><circle r="9.1" fill="#f7931a"/><g transform="rotate(13)"><text x="0" y="3.9" text-anchor="middle" font-family="Liberation Sans" font-weight="700" font-size="11" fill="#fff">B</text><path stroke="#fff" stroke-width="1" d="M-1.4 -5.6V-3.6M0.8 -5.6V-3.6M-1.4 3.6V5.6M0.8 3.6V5.6"/></g></svg>
<span class="t" style="left:259.30px;top:331.00px;font-size:10px;line-height:13px;color:#3a3f51;transform:scaleX(0.9400);">BTC</span>
<svg class="b" style="left:353.20px;top:329.03px;" width="18.6" height="18.3" viewBox="0 0 18.6 18.3"><defs><linearGradient id="dg337" x1="0" y1="0" x2="0.4" y2="1"><stop offset="0" stop-color="#86afe2"/><stop offset="1" stop-color="#4079c3"/></linearGradient></defs><rect width="18.6" height="18.3" rx="3.6" fill="#0a4f9f"/><rect x="2.7" y="3.2" width="12.2" height="11.6" rx="2.2" fill="url(#dg337)"/><rect x="5.1" y="5.9" width="5.4" height="1.5" rx="0.6" fill="#d3e2f6"/></svg>
<svg class="b" style="left:363.80px;top:338.03px;" width="10.8" height="10.8" viewBox="-5.4 -5.4 10.8 10.8"><circle r="5.4" fill="#fff"/><path fill="#fbab26" stroke="#fbab26" stroke-width="0.7" stroke-linejoin="round" d="M0 -3.5L1.03 -1.15L3.5 -1.15L1.55 0.53L2.24 3.1L0 1.7L-2.24 3.1L-1.55 0.53L-3.5 -1.15L-1.03 -1.15Z"/></svg>
<span class="t" style="left:377.90px;top:331.00px;font-size:10px;line-height:13px;color:#1a5dab;transform:scaleX(1.0569);">Diamond</span>
<span class="t" style="left:458.80px;top:331.00px;font-size:10px;line-height:13px;color:#3a3f51;transform:scaleX(0.9629);">USA</span>
<span class="t" style="left:559.30px;top:331.00px;font-size:10px;line-height:13px;color:#1a5dab;transform:scaleX(1.0730);">bc1qk...qkwr7</span>
<svg class="b" style="left:642.50px;top:329.98px;" width="12.4" height="12.2" viewBox="0 0 12.4 12.2"><rect fill="none" stroke="#2d6cb5" stroke-width="1.1" stroke-linecap="round" stroke-linejoin="round" x="3.1" y="2.9" width="8.6" height="8.6" rx="2.4"/><path fill="none" stroke="#2d6cb5" stroke-width="1.1" stroke-linecap="round" stroke-linejoin="round" d="M0.7 7.6V3.2A2.6 2.6 0 0 1 3.3 0.6H8.3"/></svg>
<span class="t" style="left:679.80px;top:331.00px;font-size:10px;line-height:13px;color:#3a3f51;">REAL-7190</span>
<div class="b" style="left:738.20px;top:328.78px;width:18.30px;height:18.30px;background:rgba(20,147,79,.14);border-radius:3.5px"></div>
<svg class="b" style="left:741.90px;top:332.28px;" width="11" height="11" viewBox="0 0 11 11"><path stroke="#149455" stroke-width="3.3" stroke-linecap="round" fill="none" d="M3.6 7.1L7.7 3"/><path fill="#149455" d="M1.1 9.5L1.9 6.2L4.5 8.8Z"/><path fill="none" stroke="#149455" stroke-width="1.1" stroke-linecap="round" stroke-linejoin="round" d="M0.8 10.5h9.4"/></svg>
<div class="b" style="left:789.30px;top:324.68px;width:25.60px;height:25.60px;border-radius:50%;background:linear-gradient(166deg,rgba(255,255,255,.5) 0,rgba(255,255,255,.5) 20%,rgba(255,255,255,.15) 22%,rgba(255,255,255,0) 42%),radial-gradient(circle closest-side,rgb(254,236,208) 0,rgb(254,236,208) 91%,rgba(254,236,208,0) 100%)"></div>
<svg class="b" style="left:798.00px;top:332.58px;filter:drop-shadow(0 0.6px 0.8px rgba(0,0,0,.18))" width="8.6" height="10.2" viewBox="0.6 0 6.8 9.2" preserveAspectRatio="none"><path fill="#fb9a1e" d="M4.2 0.2C4.4 2 7 3.2 7 5.9A3 3 0 0 1 1 5.9C1 4.5 1.8 3.8 2.3 2.9 2.7 3.6 3.1 3.8 3.4 3.6 3.8 2.6 3.7 1.4 4.2 .2z"/></svg>
<span class="t" style="left:820.70px;top:331.00px;font-size:10px;line-height:13px;color:#f7941d;transform:scaleX(0.9732);-webkit-text-stroke:0.35px #f7941d;">50,3%</span>
<div class="b rb" style="left:890.00px;top:328.68px;width:18.00px;height:18.50px;"></div>
<svg class="b" style="left:894.10px;top:333.38px;" width="10.2" height="10.5" viewBox="0 0 10.2 10.5"><path fill="none" stroke="#0654a3" stroke-width="1.15" stroke-linecap="round" stroke-linejoin="round" d="M2 7.4L8.4 1M3.9 1h4.5v4.5M0.8 9.7h8.6"/></svg>
<div class="b rb" style="left:914.20px;top:328.68px;width:18.20px;height:18.50px;"></div>
<svg class="b" style="left:918.20px;top:332.68px;overflow:visible" width="10.2" height="11.2" viewBox="0 0 10.2 12"><path fill="none" stroke="#0654a3" stroke-width="1.15" stroke-linecap="round" stroke-linejoin="round" d="M2.6 11V1.4M0.4 3.6L2.6 1.4L4.8 3.6M7.6 1v9.6M5.4 8.4L7.6 10.6L9.8 8.4"/></svg>
<div class="b" style="left:941.00px;top:328.88px;width:1.00px;height:18.30px;background:#e8ebf3"></div>
<div class="b rb" style="left:951.00px;top:328.68px;width:18.10px;height:18.50px;"></div>
<svg class="b" style="left:954.10px;top:332.58px;" width="11.6" height="12" viewBox="0 0 12 12.4"><path fill="none" stroke="#1f62b0" stroke-width="1.15" stroke-linecap="round" stroke-linejoin="round" d="M10.5 5.4V4.5A2 2 0 0 0 8.5 2.5H2.2M1.5 7V7.9A2 2 0 0 0 3.5 9.9H9.8"/><path fill="#1f62b0" stroke="#1f62b0" stroke-width="0.6" stroke-linejoin="round" d="M3.4 0.6L1.2 2.5L3.4 4.4ZM8.6 8L10.8 9.9L8.6 11.8Z"/></svg>
<div class="b" style="left:55.10px;top:368.50px;width:11.70px;height:11.80px;background:#fff;border:1px solid #e0e5f1;border-radius:2.5px"></div>
<svg class="b" style="left:81.60px;top:364.40px;" width="20" height="20" viewBox="-10 -10 20 20"><path fill="#fde8e8" stroke="#fde8e8" stroke-width="8.8" stroke-linejoin="round" d="M0 -4.2L4.6 4H-4.6Z"/><path fill="#f55a5a" stroke="#f55a5a" stroke-width="2" stroke-linejoin="round" d="M0 -4.2L4.6 4H-4.6Z"/><path stroke="#fff" stroke-width="1.15" stroke-linecap="round" d="M0 -1.9V1.1M0 3V3.1"/></svg>
<svg class="b" style="left:109.55px;top:365.65px;" width="18.5" height="18.5" viewBox="-9.1 -9.1 18.2 18.2"><circle r="9.1" fill="#26a17b"/><path fill="#fff" d="M-4.6 -4.6H4.6V-2.2H1.2V4.6H-1.2V-2.2H-4.6Z"/><ellipse cx="0" cy="-0.2" rx="5.6" ry="1.3" fill="none" stroke="#fff" stroke-width="0.7"/><circle cx="4.8" cy="4.3" r="4.4" fill="#ef0027"/><path fill="none" stroke="#fff" stroke-width="0.55" d="M2.8 2.6L6.8 3.6L4.5 6.9ZM2.8 2.6L5.2 4.6L6.8 3.6M5.2 4.6L4.5 6.9"/></svg>
<span class="t" style="left:134.30px;top:361.00px;font-size:10.5px;line-height:14px;color:#343848;-webkit-text-stroke:0.35px #343848;">4 367,02</span>
<span class="t" style="left:134.30px;top:376.00px;font-size:9px;line-height:12px;color:#9aa5b9;transform:scaleX(0.9516);">4 363,22 USD</span>
<svg class="b" style="left:234.55px;top:365.65px;" width="18.5" height="18.5" viewBox="-9.1 -9.1 18.2 18.2"><circle r="9.1" fill="#26a17b"/><path fill="#fff" d="M-4.6 -4.6H4.6V-2.2H1.2V4.6H-1.2V-2.2H-4.6Z"/><ellipse cx="0" cy="-0.2" rx="5.6" ry="1.3" fill="none" stroke="#fff" stroke-width="0.7"/><circle cx="4.8" cy="4.3" r="4.4" fill="#ef0027"/><path fill="none" stroke="#fff" stroke-width="0.55" d="M2.8 2.6L6.8 3.6L4.5 6.9ZM2.8 2.6L5.2 4.6L6.8 3.6M5.2 4.6L4.5 6.9"/></svg>
<span class="t" style="left:259.30px;top:368.00px;font-size:10px;line-height:13px;color:#3a3f51;transform:scaleX(0.9679);">USDT-TRC20</span>
<svg class="b" style="left:353.20px;top:365.55px;" width="18.6" height="18.3" viewBox="0 0 18.6 18.3"><rect width="18.6" height="18.3" rx="3.6" fill="#4aa8f6"/></svg>
<span class="t" style="left:357.80px;top:368.00px;font-size:8.8px;line-height:12px;color:#fff;letter-spacing:-0.2px;">Bl</span>
<svg class="b" style="left:363.80px;top:374.55px;" width="10.8" height="10.8" viewBox="-5.4 -5.4 10.8 10.8"><circle r="5.4" fill="#fff"/><path fill="#fbab26" stroke="#fbab26" stroke-width="0.7" stroke-linejoin="round" d="M0 -3.5L1.03 -1.15L3.5 -1.15L1.55 0.53L2.24 3.1L0 1.7L-2.24 3.1L-1.55 0.53L-3.5 -1.15L-1.03 -1.15Z"/></svg>
<span class="t" style="left:377.90px;top:368.00px;font-size:10px;line-height:13px;color:#1a5dab;transform:scaleX(1.0118);">BlueW</span>
<span class="t" style="left:458.80px;top:368.00px;font-size:10px;line-height:13px;color:#3a3f51;transform:scaleX(1.0284);">India</span>
<span class="t" style="left:559.30px;top:368.00px;font-size:10px;line-height:13px;color:#1a5dab;transform:scaleX(1.0463);">Tx693...e7658</span>
<svg class="b" style="left:642.50px;top:366.50px;" width="12.4" height="12.2" viewBox="0 0 12.4 12.2"><rect fill="none" stroke="#2d6cb5" stroke-width="1.1" stroke-linecap="round" stroke-linejoin="round" x="3.1" y="2.9" width="8.6" height="8.6" rx="2.4"/><path fill="none" stroke="#2d6cb5" stroke-width="1.1" stroke-linecap="round" stroke-linejoin="round" d="M0.7 7.6V3.2A2.6 2.6 0 0 1 3.3 0.6H8.3"/></svg>
<span class="t" style="left:679.80px;top:368.00px;font-size:10px;line-height:13px;color:#3a3f51;">REAL-7190</span>
<div class="b" style="left:738.20px;top:365.30px;width:18.30px;height:18.30px;background:rgba(20,147,79,.14);border-radius:3.5px"></div>
<svg class="b" style="left:741.90px;top:368.80px;" width="11" height="11" viewBox="0 0 11 11"><path stroke="#149455" stroke-width="3.3" stroke-linecap="round" fill="none" d="M3.6 7.1L7.7 3"/><path fill="#149455" d="M1.1 9.5L1.9 6.2L4.5 8.8Z"/><path fill="none" stroke="#149455" stroke-width="1.1" stroke-linecap="round" stroke-linejoin="round" d="M0.8 10.5h9.4"/></svg>
<div class="b" style="left:790.70px;top:362.60px;width:22.80px;height:22.80px;border-radius:50%;background:#fff;box-shadow:0 0.5px 3px rgba(60,70,110,.3)"></div>
<svg class="b" style="left:798.00px;top:369.10px;filter:drop-shadow(0 0.6px 0.8px rgba(0,0,0,.18))" width="8.6" height="10.2" viewBox="0.6 0 6.8 9.2" preserveAspectRatio="none"><path fill="#3f4560" d="M4.2 0.2C4.4 2 7 3.2 7 5.9A3 3 0 0 1 1 5.9C1 4.5 1.8 3.8 2.3 2.9 2.7 3.6 3.1 3.8 3.4 3.6 3.8 2.6 3.7 1.4 4.2 .2z"/></svg>
<span class="t" style="left:820.70px;top:368.00px;font-size:10px;line-height:13px;color:#3f4560;transform:scaleX(0.9732);-webkit-text-stroke:0.35px #3f4560;">60,9%</span>
<div class="b rb" style="left:890.00px;top:365.20px;width:18.00px;height:18.50px;"></div>
<svg class="b" style="left:894.10px;top:369.90px;" width="10.2" height="10.5" viewBox="0 0 10.2 10.5"><path fill="none" stroke="#0654a3" stroke-width="1.15" stroke-linecap="round" stroke-linejoin="round" d="M2 7.4L8.4 1M3.9 1h4.5v4.5M0.8 9.7h8.6"/></svg>
<div class="b rb" style="left:914.20px;top:365.20px;width:18.20px;height:18.50px;"></div>
<svg class="b" style="left:918.20px;top:369.20px;overflow:visible" width="10.2" height="11.2" viewBox="0 0 10.2 12"><path fill="none" stroke="#0654a3" stroke-width="1.15" stroke-linecap="round" stroke-linejoin="round" d="M2.6 11V1.4M0.4 3.6L2.6 1.4L4.8 3.6M7.6 1v9.6M5.4 8.4L7.6 10.6L9.8 8.4"/></svg>
<div class="b" style="left:941.00px;top:365.40px;width:1.00px;height:18.30px;background:#e8ebf3"></div>
<div class="b rb" style="left:951.00px;top:365.20px;width:18.10px;height:18.50px;"></div>
<svg class="b" style="left:954.10px;top:369.10px;" width="11.6" height="12" viewBox="0 0 12 12.4"><path fill="none" stroke="#1f62b0" stroke-width="1.15" stroke-linecap="round" stroke-linejoin="round" d="M10.5 5.4V4.5A2 2 0 0 0 8.5 2.5H2.2M1.5 7V7.9A2 2 0 0 0 3.5 9.9H9.8"/><path fill="#1f62b0" stroke="#1f62b0" stroke-width="0.6" stroke-linejoin="round" d="M3.4 0.6L1.2 2.5L3.4 4.4ZM8.6 8L10.8 9.9L8.6 11.8Z"/></svg>
<div class="b" style="left:55.10px;top:405.02px;width:11.70px;height:11.80px;background:#fff;border:1px solid #e0e5f1;border-radius:2.5px"></div>
<svg class="b" style="left:109.55px;top:402.17px;" width="18.5" height="18.5" viewBox="-9.1 -9.1 18.2 18.2"><circle r="9.1" fill="#26a17b"/><path fill="#fff" d="M-4.6 -4.6H4.6V-2.2H1.2V4.6H-1.2V-2.2H-4.6Z"/><ellipse cx="0" cy="-0.2" rx="5.6" ry="1.3" fill="none" stroke="#fff" stroke-width="0.7"/><circle cx="4.8" cy="4.3" r="4.4" fill="#ef0027"/><path fill="none" stroke="#fff" stroke-width="0.55" d="M2.8 2.6L6.8 3.6L4.5 6.9ZM2.8 2.6L5.2 4.6L6.8 3.6M5.2 4.6L4.5 6.9"/></svg>
<span class="t" style="left:134.30px;top:398.00px;font-size:10.5px;line-height:14px;color:#343848;-webkit-text-stroke:0.35px #343848;">3 267,02</span>
<span class="t" style="left:134.30px;top:412.00px;font-size:9px;line-height:12px;color:#9aa5b9;transform:scaleX(0.9516);">3 263,22 USD</span>
<svg class="b" style="left:234.55px;top:402.17px;" width="18.5" height="18.5" viewBox="-9.1 -9.1 18.2 18.2"><circle r="9.1" fill="#26a17b"/><path fill="#fff" d="M-4.6 -4.6H4.6V-2.2H1.2V4.6H-1.2V-2.2H-4.6Z"/><ellipse cx="0" cy="-0.2" rx="5.6" ry="1.3" fill="none" stroke="#fff" stroke-width="0.7"/><circle cx="4.8" cy="4.3" r="4.4" fill="#ef0027"/><path fill="none" stroke="#fff" stroke-width="0.55" d="M2.8 2.6L6.8 3.6L4.5 6.9ZM2.8 2.6L5.2 4.6L6.8 3.6M5.2 4.6L4.5 6.9"/></svg>
<span class="t" style="left:259.30px;top:405.00px;font-size:10px;line-height:13px;color:#3a3f51;transform:scaleX(0.9679);">USDT-TRC20</span>
<svg class="b" style="left:353.20px;top:402.07px;" width="18.6" height="18.3" viewBox="0 0 18.6 18.3"><rect width="18.6" height="18.3" rx="3.6" fill="#fbb02e"/></svg>
<span class="t" style="left:357.80px;top:405.00px;font-size:8.8px;line-height:12px;color:#fff;letter-spacing:-0.2px;">Or</span>
<span class="t" style="left:377.90px;top:405.00px;font-size:10px;line-height:13px;color:#1a5dab;transform:scaleX(1.0072);">OrangeW</span>
<span class="t" style="left:458.80px;top:405.00px;font-size:10px;line-height:13px;color:#3a3f51;transform:scaleX(1.0284);">India</span>
<span class="t" style="left:559.30px;top:405.00px;font-size:10px;line-height:13px;color:#1a5dab;transform:scaleX(1.0463);">Tx015...12e9d</span>
<svg class="b" style="left:642.50px;top:403.02px;" width="12.4" height="12.2" viewBox="0 0 12.4 12.2"><rect fill="none" stroke="#2d6cb5" stroke-width="1.1" stroke-linecap="round" stroke-linejoin="round" x="3.1" y="2.9" width="8.6" height="8.6" rx="2.4"/><path fill="none" stroke="#2d6cb5" stroke-width="1.1" stroke-linecap="round" stroke-linejoin="round" d="M0.7 7.6V3.2A2.6 2.6 0 0 1 3.3 0.6H8.3"/></svg>
<div class="b" style="left:679.80px;top:401.82px;width:49.30px;height:18.30px;background:#e2f5ea;border-radius:3.5px"></div>
<svg class="b" style="left:687.00px;top:405.32px;" width="11" height="11" viewBox="0 0 11 11"><path stroke="#149455" stroke-width="3.3" stroke-linecap="round" fill="none" d="M3.6 7.1L7.7 3"/><path fill="#149455" d="M1.1 9.5L1.9 6.2L4.5 8.8Z"/><path fill="none" stroke="#149455" stroke-width="1.1" stroke-linecap="round" stroke-linejoin="round" d="M0.8 10.5h9.4"/></svg>
<span class="t" style="left:704.40px;top:405.00px;font-size:10px;line-height:13px;color:#149455;transform:scaleX(1.0182);-webkit-text-stroke:0.3px #149455;">Add</span>
<div class="b" style="left:789.30px;top:397.72px;width:25.60px;height:25.60px;border-radius:50%;background:linear-gradient(166deg,rgba(255,255,255,.5) 0,rgba(255,255,255,.5) 20%,rgba(255,255,255,.15) 22%,rgba(255,255,255,0) 42%),radial-gradient(circle closest-side,rgb(252,214,214) 0,rgb(252,214,214) 91%,rgba(252,214,214,0) 100%)"></div>
<svg class="b" style="left:798.00px;top:405.62px;filter:drop-shadow(0 0.6px 0.8px rgba(0,0,0,.18))" width="8.6" height="10.2" viewBox="0.6 0 6.8 9.2" preserveAspectRatio="none"><path fill="#f55e5e" d="M4.2 0.2C4.4 2 7 3.2 7 5.9A3 3 0 0 1 1 5.9C1 4.5 1.8 3.8 2.3 2.9 2.7 3.6 3.1 3.8 3.4 3.6 3.8 2.6 3.7 1.4 4.2 .2z"/></svg>
<span class="t" style="left:820.70px;top:405.00px;font-size:10px;line-height:13px;color:#f25b5b;transform:scaleX(0.9543);-webkit-text-stroke:0.35px #f25b5b;">85%</span>
<div class="b rb" style="left:890.00px;top:401.72px;width:18.00px;height:18.50px;"></div>
<svg class="b" style="left:894.10px;top:406.42px;" width="10.2" height="10.5" viewBox="0 0 10.2 10.5"><path fill="none" stroke="#0654a3" stroke-width="1.15" stroke-linecap="round" stroke-linejoin="round" d="M2 7.4L8.4 1M3.9 1h4.5v4.5M0.8 9.7h8.6"/></svg>
<div class="b rb" style="left:914.20px;top:401.72px;width:18.20px;height:18.50px;"></div>
<svg class="b" style="left:918.20px;top:405.72px;overflow:visible" width="10.2" height="11.2" viewBox="0 0 10.2 12"><path fill="none" stroke="#0654a3" stroke-width="1.15" stroke-linecap="round" stroke-linejoin="round" d="M2.6 11V1.4M0.4 3.6L2.6 1.4L4.8 3.6M7.6 1v9.6M5.4 8.4L7.6 10.6L9.8 8.4"/></svg>
<div class="b" style="left:941.00px;top:401.92px;width:1.00px;height:18.30px;background:#e8ebf3"></div>
<div class="b rb" style="left:951.00px;top:401.72px;width:18.10px;height:18.50px;"></div>
<svg class="b" style="left:954.10px;top:405.62px;" width="11.6" height="12" viewBox="0 0 12 12.4"><path fill="none" stroke="#1f62b0" stroke-width="1.15" stroke-linecap="round" stroke-linejoin="round" d="M10.5 5.4V4.5A2 2 0 0 0 8.5 2.5H2.2M1.5 7V7.9A2 2 0 0 0 3.5 9.9H9.8"/><path fill="#1f62b0" stroke="#1f62b0" stroke-width="0.6" stroke-linejoin="round" d="M3.4 0.6L1.2 2.5L3.4 4.4ZM8.6 8L10.8 9.9L8.6 11.8Z"/></svg>
<div class="b" style="left:55.10px;top:441.54px;width:11.70px;height:11.80px;background:#fff;border:1px solid #e0e5f1;border-radius:2.5px"></div>
<svg class="b" style="left:109.55px;top:438.69px;" width="18.5" height="18.5" viewBox="-9.1 -9.1 18.2 18.2"><circle r="9.1" fill="#26a17b"/><path fill="#fff" d="M-4.6 -4.6H4.6V-2.2H1.2V4.6H-1.2V-2.2H-4.6Z"/><ellipse cx="0" cy="-0.2" rx="5.6" ry="1.3" fill="none" stroke="#fff" stroke-width="0.7"/><circle cx="4.8" cy="4.3" r="4.4" fill="#ef0027"/><path fill="none" stroke="#fff" stroke-width="0.55" d="M2.8 2.6L6.8 3.6L4.5 6.9ZM2.8 2.6L5.2 4.6L6.8 3.6M5.2 4.6L4.5 6.9"/></svg>
<span class="t" style="left:134.30px;top:434.00px;font-size:10.5px;line-height:14px;color:#343848;-webkit-text-stroke:0.35px #343848;">4 012,02</span>
<span class="t" style="left:134.30px;top:449.00px;font-size:9px;line-height:12px;color:#9aa5b9;transform:scaleX(0.9516);">4 012,22 USD</span>
<svg class="b" style="left:234.55px;top:438.69px;" width="18.5" height="18.5" viewBox="-9.1 -9.1 18.2 18.2"><circle r="9.1" fill="#26a17b"/><path fill="#fff" d="M-4.6 -4.6H4.6V-2.2H1.2V4.6H-1.2V-2.2H-4.6Z"/><ellipse cx="0" cy="-0.2" rx="5.6" ry="1.3" fill="none" stroke="#fff" stroke-width="0.7"/><circle cx="4.8" cy="4.3" r="4.4" fill="#ef0027"/><path fill="none" stroke="#fff" stroke-width="0.55" d="M2.8 2.6L6.8 3.6L4.5 6.9ZM2.8 2.6L5.2 4.6L6.8 3.6M5.2 4.6L4.5 6.9"/></svg>
<span class="t" style="left:259.30px;top:441.00px;font-size:10px;line-height:13px;color:#3a3f51;transform:scaleX(0.9679);">USDT-TRC20</span>
<svg class="b" style="left:353.20px;top:438.59px;" width="18.6" height="18.3" viewBox="0 0 18.6 18.3"><rect width="18.6" height="18.3" rx="3.6" fill="#fb5d5d"/></svg>
<span class="t" style="left:357.80px;top:441.00px;font-size:8.8px;line-height:12px;color:#fff;letter-spacing:-0.2px;">Re</span>
<span class="t" style="left:377.90px;top:441.00px;font-size:10px;line-height:13px;color:#1a5dab;transform:scaleX(0.9898);">RedW</span>
<span class="t" style="left:458.80px;top:441.00px;font-size:10px;line-height:13px;color:#3a3f51;transform:scaleX(0.9629);">USA</span>
<span class="t" style="left:559.30px;top:441.00px;font-size:10px;line-height:13px;color:#1a5dab;transform:scaleX(1.0546);">Txfa9...8c671</span>
<svg class="b" style="left:642.50px;top:439.54px;" width="12.4" height="12.2" viewBox="0 0 12.4 12.2"><rect fill="none" stroke="#2d6cb5" stroke-width="1.1" stroke-linecap="round" stroke-linejoin="round" x="3.1" y="2.9" width="8.6" height="8.6" rx="2.4"/><path fill="none" stroke="#2d6cb5" stroke-width="1.1" stroke-linecap="round" stroke-linejoin="round" d="M0.7 7.6V3.2A2.6 2.6 0 0 1 3.3 0.6H8.3"/></svg>
<div class="b" style="left:679.80px;top:438.34px;width:49.30px;height:18.30px;background:#e2f5ea;border-radius:3.5px"></div>
<svg class="b" style="left:687.00px;top:441.84px;" width="11" height="11" viewBox="0 0 11 11"><path stroke="#149455" stroke-width="3.3" stroke-linecap="round" fill="none" d="M3.6 7.1L7.7 3"/><path fill="#149455" d="M1.1 9.5L1.9 6.2L4.5 8.8Z"/><path fill="none" stroke="#149455" stroke-width="1.1" stroke-linecap="round" stroke-linejoin="round" d="M0.8 10.5h9.4"/></svg>
<span class="t" style="left:704.40px;top:441.00px;font-size:10px;line-height:13px;color:#149455;transform:scaleX(1.0182);-webkit-text-stroke:0.3px #149455;">Add</span>
<div class="b" style="left:790.50px;top:438.34px;width:83.20px;height:18.30px;background:#e2f5ea;border-radius:3.5px"></div>
<svg class="b" style="left:796.20px;top:441.64px;" width="11.6" height="11.6" viewBox="0 0 12 12"><path fill="none" stroke="#149455" stroke-width="1.0" stroke-linecap="round" stroke-linejoin="round" d="M1 4.8V2.8A1.8 1.8 0 0 1 2.8 1H4.9M7.1 1H9.2A1.8 1.8 0 0 1 11 2.8V4.8M11 9V9.2A1.8 1.8 0 0 1 9.2 11H7.1M4.9 11H2.8A1.8 1.8 0 0 1 1 9.2V9"/><path fill="#149455" d="M6 2.7L8.5 6.5H3.5z"/><path fill="none" stroke="#149455" stroke-width="0.9" stroke-linecap="round" stroke-linejoin="round" d="M0.8 7.5h10.4"/><path fill="#149455" d="M3.9 8.4h4.2Q6 10.3 3.9 8.4z"/></svg>
<span class="t" style="left:814.90px;top:441.00px;font-size:10px;line-height:13px;color:#149455;transform:scaleX(1.0716);-webkit-text-stroke:0.3px #149455;">AML check</span>
<div class="b rb" style="left:890.00px;top:438.24px;width:18.00px;height:18.50px;"></div>
<svg class="b" style="left:894.10px;top:442.94px;" width="10.2" height="10.5" viewBox="0 0 10.2 10.5"><path fill="none" stroke="#0654a3" stroke-width="1.15" stroke-linecap="round" stroke-linejoin="round" d="M2 7.4L8.4 1M3.9 1h4.5v4.5M0.8 9.7h8.6"/></svg>
<div class="b rb" style="left:914.20px;top:438.24px;width:18.20px;height:18.50px;"></div>
<svg class="b" style="left:918.20px;top:442.24px;overflow:visible" width="10.2" height="11.2" viewBox="0 0 10.2 12"><path fill="none" stroke="#0654a3" stroke-width="1.15" stroke-linecap="round" stroke-linejoin="round" d="M2.6 11V1.4M0.4 3.6L2.6 1.4L4.8 3.6M7.6 1v9.6M5.4 8.4L7.6 10.6L9.8 8.4"/></svg>
<div class="b" style="left:941.00px;top:438.44px;width:1.00px;height:18.30px;background:#e8ebf3"></div>
<div class="b rb" style="left:951.00px;top:438.24px;width:18.10px;height:18.50px;"></div>
<svg class="b" style="left:954.10px;top:442.14px;" width="11.6" height="12" viewBox="0 0 12 12.4"><path fill="none" stroke="#1f62b0" stroke-width="1.15" stroke-linecap="round" stroke-linejoin="round" d="M10.5 5.4V4.5A2 2 0 0 0 8.5 2.5H2.2M1.5 7V7.9A2 2 0 0 0 3.5 9.9H9.8"/><path fill="#1f62b0" stroke="#1f62b0" stroke-width="0.6" stroke-linejoin="round" d="M3.4 0.6L1.2 2.5L3.4 4.4ZM8.6 8L10.8 9.9L8.6 11.8Z"/></svg>
<div class="b" style="left:55.10px;top:478.06px;width:11.70px;height:11.80px;background:#fff;border:1px solid #e0e5f1;border-radius:2.5px"></div>
<svg class="b" style="left:82.40px;top:474.96px;" width="18" height="18" viewBox="-9 -9 18 18"><circle r="9" fill="#eaecf2"/><circle r="5.2" fill="#929bad"/><path stroke="#fff" stroke-width="1.2" stroke-linecap="round" d="M0 -2.4V0.5M0 2.5V2.6"/></svg>
<svg class="b" style="left:109.55px;top:475.21px;" width="18.5" height="18.5" viewBox="-9.1 -9.1 18.2 18.2"><circle r="9.1" fill="#26a17b"/><path fill="#fff" d="M-4.6 -4.6H4.6V-2.2H1.2V4.6H-1.2V-2.2H-4.6Z"/><ellipse cx="0" cy="-0.2" rx="5.6" ry="1.3" fill="none" stroke="#fff" stroke-width="0.7"/><circle cx="4.8" cy="4.3" r="4.4" fill="#ef0027"/><path fill="none" stroke="#fff" stroke-width="0.55" d="M2.8 2.6L6.8 3.6L4.5 6.9ZM2.8 2.6L5.2 4.6L6.8 3.6M5.2 4.6L4.5 6.9"/></svg>
<span class="t" style="left:134.30px;top:471.00px;font-size:10.5px;line-height:14px;color:#343848;-webkit-text-stroke:0.35px #343848;">4 012,02</span>
<span class="t" style="left:134.30px;top:485.00px;font-size:9px;line-height:12px;color:#9aa5b9;transform:scaleX(0.9516);">4 012,22 USD</span>
<svg class="b" style="left:234.55px;top:475.21px;" width="18.5" height="18.5" viewBox="-9.1 -9.1 18.2 18.2"><circle r="9.1" fill="#26a17b"/><path fill="#fff" d="M-4.6 -4.6H4.6V-2.2H1.2V4.6H-1.2V-2.2H-4.6Z"/><ellipse cx="0" cy="-0.2" rx="5.6" ry="1.3" fill="none" stroke="#fff" stroke-width="0.7"/><circle cx="4.8" cy="4.3" r="4.4" fill="#ef0027"/><path fill="none" stroke="#fff" stroke-width="0.55" d="M2.8 2.6L6.8 3.6L4.5 6.9ZM2.8 2.6L5.2 4.6L6.8 3.6M5.2 4.6L4.5 6.9"/></svg>
<span class="t" style="left:259.30px;top:478.00px;font-size:10px;line-height:13px;color:#3a3f51;transform:scaleX(0.9679);">USDT-TRC20</span>
<svg class="b" style="left:353.20px;top:475.11px;" width="18.6" height="18.3" viewBox="0 0 18.6 18.3"><rect width="18.6" height="18.3" rx="3.6" fill="#fb8c8c"/></svg>
<span class="t" style="left:357.80px;top:478.00px;font-size:8.8px;line-height:12px;color:#fff;letter-spacing:-0.2px;">Co</span>
<span class="t" style="left:377.90px;top:478.00px;font-size:10px;line-height:13px;color:#1a5dab;transform:scaleX(1.0169);">CoralW</span>
<span class="t" style="left:458.80px;top:478.00px;font-size:10px;line-height:13px;color:#3a3f51;transform:scaleX(1.0828);">Austria</span>
<span class="t" style="left:559.30px;top:478.00px;font-size:10px;line-height:13px;color:#1a5dab;transform:scaleX(1.0495);">Tx668...800e2</span>
<svg class="b" style="left:642.50px;top:476.06px;" width="12.4" height="12.2" viewBox="0 0 12.4 12.2"><rect fill="none" stroke="#2d6cb5" stroke-width="1.1" stroke-linecap="round" stroke-linejoin="round" x="3.1" y="2.9" width="8.6" height="8.6" rx="2.4"/><path fill="none" stroke="#2d6cb5" stroke-width="1.1" stroke-linecap="round" stroke-linejoin="round" d="M0.7 7.6V3.2A2.6 2.6 0 0 1 3.3 0.6H8.3"/></svg>
<div class="b" style="left:679.80px;top:474.86px;width:49.30px;height:18.30px;background:#e2f5ea;border-radius:3.5px"></div>
<svg class="b" style="left:687.00px;top:478.36px;" width="11" height="11" viewBox="0 0 11 11"><path stroke="#149455" stroke-width="3.3" stroke-linecap="round" fill="none" d="M3.6 7.1L7.7 3"/><path fill="#149455" d="M1.1 9.5L1.9 6.2L4.5 8.8Z"/><path fill="none" stroke="#149455" stroke-width="1.1" stroke-linecap="round" stroke-linejoin="round" d="M0.8 10.5h9.4"/></svg>
<span class="t" style="left:704.40px;top:478.00px;font-size:10px;line-height:13px;color:#149455;transform:scaleX(1.0182);-webkit-text-stroke:0.3px #149455;">Add</span>
<div class="b" style="left:789.30px;top:470.76px;width:25.60px;height:25.60px;border-radius:50%;background:linear-gradient(166deg,rgba(255,255,255,.5) 0,rgba(255,255,255,.5) 20%,rgba(255,255,255,.15) 22%,rgba(255,255,255,0) 42%),radial-gradient(circle closest-side,rgb(217,241,230) 0,rgb(217,241,230) 91%,rgba(217,241,230,0) 100%)"></div>
<svg class="b" style="left:798.00px;top:478.66px;filter:drop-shadow(0 0.6px 0.8px rgba(0,0,0,.18))" width="8.6" height="10.2" viewBox="0.6 0 6.8 9.2" preserveAspectRatio="none"><path fill="#1aa660" d="M4.2 0.2C4.4 2 7 3.2 7 5.9A3 3 0 0 1 1 5.9C1 4.5 1.8 3.8 2.3 2.9 2.7 3.6 3.1 3.8 3.4 3.6 3.8 2.6 3.7 1.4 4.2 .2z"/></svg>
<span class="t" style="left:820.70px;top:478.00px;font-size:10px;line-height:13px;color:#14934f;transform:scaleX(0.9802);-webkit-text-stroke:0.35px #14934f;">25,1%</span>
<div class="b" style="left:890.00px;top:474.76px;width:18.00px;height:18.50px;background:#dcf2e5;border-radius:4px"></div>
<svg class="b" style="left:894.40px;top:478.26px;" width="9.4" height="12" viewBox="0 0 9.4 12"><path fill="none" stroke="#149455" stroke-width="0.95" stroke-linecap="round" stroke-linejoin="round" d="M6 .8L1 6.7H3.9L3 11.2L8.4 5H5.3Z"/></svg>
<div class="b rb" style="left:914.20px;top:474.76px;width:18.20px;height:18.50px;"></div>
<svg class="b" style="left:918.20px;top:478.76px;overflow:visible" width="10.2" height="11.2" viewBox="0 0 10.2 12"><path fill="none" stroke="#0654a3" stroke-width="1.15" stroke-linecap="round" stroke-linejoin="round" d="M2.6 11V1.4M0.4 3.6L2.6 1.4L4.8 3.6M7.6 1v9.6M5.4 8.4L7.6 10.6L9.8 8.4"/></svg>
<div class="b" style="left:941.00px;top:474.96px;width:1.00px;height:18.30px;background:#e8ebf3"></div>
<div class="b rb" style="left:951.00px;top:474.76px;width:18.10px;height:18.50px;"></div>
<svg class="b" style="left:954.10px;top:478.66px;" width="11.6" height="12" viewBox="0 0 12 12.4"><path fill="none" stroke="#1f62b0" stroke-width="1.15" stroke-linecap="round" stroke-linejoin="round" d="M10.5 5.4V4.5A2 2 0 0 0 8.5 2.5H2.2M1.5 7V7.9A2 2 0 0 0 3.5 9.9H9.8"/><path fill="#1f62b0" stroke="#1f62b0" stroke-width="0.6" stroke-linejoin="round" d="M3.4 0.6L1.2 2.5L3.4 4.4ZM8.6 8L10.8 9.9L8.6 11.8Z"/></svg>
<div class="b" style="left:974.20px;top:282.00px;width:3.70px;height:87.60px;background:#aab5c9;border-radius:2px"></div>
<div class="b" style="left:46.30px;top:504.20px;width:87.70px;height:4.40px;background:#aab5c9;border-radius:2.3px"></div>
<span class="t" style="left:55.30px;top:526.00px;font-size:11px;line-height:15px;color:#9aa5b9;transform:scaleX(0.9439);">Lines per page</span>
<div class="b btn" style="left:131.30px;top:522.30px;width:37.40px;height:21.10px;"></div>
<span class="t" style="left:137.80px;top:526.00px;font-size:11px;line-height:15px;color:#8a94a8;transform:scaleX(0.8990);">10</span>
<svg class="b" style="left:155.80px;top:531.30px;" width="5.4" height="3" viewBox="0 0 5.4 3"><path fill="#7f8a9f" d="M0 0h5.4L2.7 3z"/></svg>
<span class="t" style="left:689.60px;top:526.00px;font-size:11px;line-height:15px;color:#9aa5b9;transform:scaleX(0.9630);">1-10 of 120</span>
<svg class="b" style="left:762.00px;top:529.90px;" width="3.6" height="6.2" viewBox="0 0 4.4 7.6"><path fill="none" stroke="#8a94a8" stroke-width="1.2" stroke-linecap="round" stroke-linejoin="round" d="M3.8 .6L.7 3.8L3.8 7"/></svg>
<div class="b pg" style="left:777.30px;top:522.30px;width:21.10px;height:21.10px;background:#0654a3;color:#fff;font-weight:700">1</div>
<div class="b pg" style="left:801.60px;top:522.30px;width:21.00px;height:21.10px;">2</div>
<div class="b pg" style="left:826.00px;top:522.30px;width:21.00px;height:21.10px;">3</div>
<div class="b pg" style="left:850.40px;top:522.30px;width:21.00px;height:21.10px;">4</div>
<div class="b pg" style="left:874.90px;top:522.30px;width:21.00px;height:21.10px;">5</div>
<div class="b pg" style="left:923.40px;top:522.30px;width:21.00px;height:21.10px;">10</div>
<span class="t" style="left:905.30px;top:526.00px;font-size:11px;line-height:15px;color:#666d80;transform:scaleX(0.8835);">...</span>
<svg class="b" style="left:956.60px;top:529.90px;" width="3.6" height="6.2" viewBox="0 0 4.4 7.6"><path fill="none" stroke="#3a3f51" stroke-width="1.35" stroke-linecap="round" stroke-linejoin="round" d="M.6 .6L3.7 3.8L.6 7"/></svg>
<svg class="b" style="left:0.00px;top:0.00px;pointer-events:none" width="1024" height="598" viewBox="0 0 1024 598"><rect x="41.7" y="212.2" width="940.8" height="32.3" rx="7.8" fill="none" stroke="#f3000c" stroke-width="1.6"/></svg>
</div></body></html>
